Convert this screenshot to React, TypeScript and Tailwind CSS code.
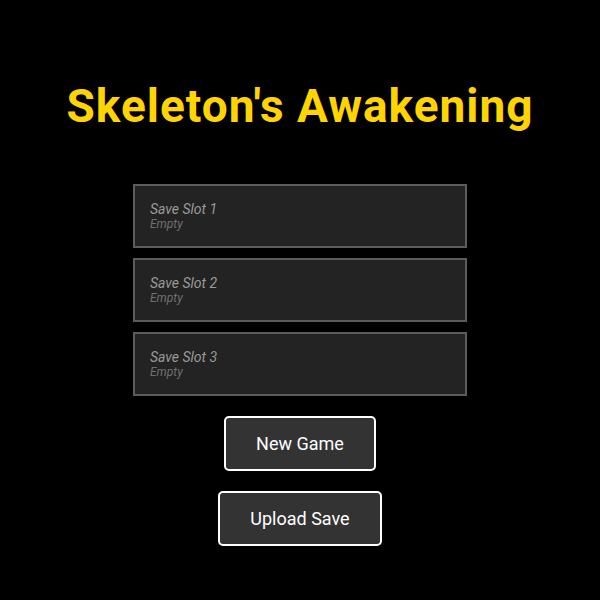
import React from 'react';

const slots = [
  { name: 'Save Slot 1', info: 'Empty' },
  { name: 'Save Slot 2', info: 'Empty' },
  { name: 'Save Slot 3', info: 'Empty' },
];

function SlotCard({ name, info }: { name: string; info: string }) {
  return (
    <button className="w-[334px] h-[64px] box-border border-2 border-[#5c5c5c] bg-[#232323] pl-[15px] pt-[15px] flex flex-col items-start text-left italic">
      <span className="text-[14px] leading-[16px] text-[#9a9a9a]">{name}</span>
      <span className="text-[12px] leading-[14px] text-[#6f6f6f]">{info}</span>
    </button>
  );
}

function MenuButton({ label }: { label: string }) {
  return (
    <button className="h-[55px] box-border px-[30px] border-2 border-white rounded-[5px] bg-[#333333] text-white text-[18px] leading-[22px]">
      {label}
    </button>
  );
}

export default function App() {
  return (
    <div
      className="w-[600px] h-[600px] bg-black flex flex-col items-center"
      style={{ fontFamily: 'Roboto, "Noto Sans", sans-serif' }}
    >
      <h1 className="mt-[79px] text-[46px] leading-[54px] font-bold tracking-[1px] text-[#ffd400]">
        Skeleton's Awakening
      </h1>

      {/* save slots */}
      <div className="mt-[51px] flex flex-col gap-[10px]">
        {slots.map(s => (
          <SlotCard key={s.name} name={s.name} info={s.info} />
        ))}
      </div>

      <div className="mt-[20px] flex flex-col items-center gap-[20px]">
        <MenuButton label="New Game" />
        <MenuButton label="Upload Save" />
      </div>
    </div>
  );
}
